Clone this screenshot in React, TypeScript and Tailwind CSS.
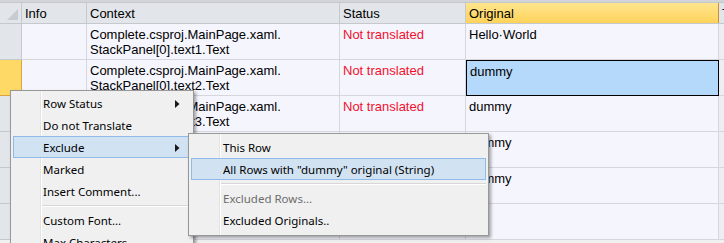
import React from "react";

const cols = [
  { key: "info", title: "Info", w: "w-[65px]" },
  { key: "context", title: "Context", w: "w-[253px]" },
  { key: "status", title: "Status", w: "w-[126px]" },
  { key: "original", title: "Original", w: "w-[253px]" },
];

const rows = [
  { ctx: "text1", status: "Not translated", orig: "Hello·World" },
  { ctx: "text2", status: "Not translated", orig: "dummy", selected: true },
  { ctx: "text3", status: "Not translated", orig: "dummy" },
  { ctx: "text4", status: "Not translated", orig: "dummy" },
  { ctx: "text5", status: "Not translated", orig: "dummy" },
  { ctx: "", status: "", orig: "" },
];

function Arrow() {
  return (
    <svg width="5" height="8" viewBox="0 0 5 8" className="absolute right-[10px] top-[7px]">
      <path d="M0 0 L4.5 4 L0 8 Z" fill="#1a1a1a" />
    </svg>
  );
}

function MenuItem({
  label,
  hot,
  arrow,
  disabled,
  sub,
}: {
  label: string;
  hot?: boolean;
  arrow?: boolean;
  disabled?: boolean;
  sub?: boolean;
}) {
  return (
    <div
      className={
        "relative h-[22px] mx-[2px] flex items-center border " +
        (hot ? "bg-[#d1e2f2] border-[#8fbbe8]" : "border-transparent")
      }
    >
      <span className={(sub ? "pl-[31px] " : "pl-[29px] ") + (disabled ? "text-[#6d6d6d]" : "text-[#000]")}>
        {label}
      </span>
      {arrow && <Arrow />}
    </div>
  );
}

function Separator() {
  return (
    <div className="h-[7px] flex items-center pl-[30px] pr-[2px]">
      <div className="w-full h-[2px] border-t border-[#d7d7d7] border-b border-b-white" />
    </div>
  );
}

export default function App() {
  return (
    <div className="relative w-[724px] h-[243px] overflow-hidden bg-[#f0f0f0] font-['Liberation_Sans',Arial,sans-serif] text-[13px] leading-[15px] text-black">
      <div className="h-[3px] bg-[#d2d4d7] border-b border-[#c4c7cb]" />
      {/* header */}
      <div className="flex h-[21px] border-b border-[#c5c8cc] bg-[#e2e5e9]">
        <div className="relative w-[22px] shrink-0 border-r border-[#c5c8cc]">
          <svg width="11" height="11" className="absolute right-[3px] bottom-[3px]">
            <path d="M11 0 L11 11 L0 11 Z" fill="#c8cbcf" />
          </svg>
        </div>
        {cols.map((c) => (
          <div
            key={c.key}
            className={
              c.w +
              " shrink-0 border-r pl-[3px] flex items-center " +
              (c.key === "original"
                ? "bg-gradient-to-b from-[#ffe58c] to-[#fed35a] border-[#c8903a]"
                : "border-[#c5c8cc]")
            }
          >
            {c.title}
          </div>
        ))}
        <div className="flex-1 pl-[3px] flex items-center overflow-hidden whitespace-nowrap text-[#2a1a4a]">
          Translation
        </div>
      </div>
      {/* rows */}
      {rows.map((r, i) => (
        <div key={i} className="flex h-[36px]">
          <div
            className={
              "w-[22px] shrink-0 border-r border-b " +
              (r.selected ? "bg-[#ffd965] border-[#d9a441]" : "bg-[#e2e5e9] border-[#c5c8cc]")
            }
          />
          <div className="w-[65px] shrink-0 bg-[#f5f5fe] border-r border-b border-[#d6d6de]" />
          <div className="w-[253px] shrink-0 bg-[#f5f5fe] border-r border-b border-[#d6d6de] pl-[3px] pt-[3px]">
            {r.ctx && (
              <>
                <div>Complete.csproj.MainPage.xaml.</div>
                <div>StackPanel[0].{r.ctx}.Text</div>
              </>
            )}
          </div>
          <div className="w-[126px] shrink-0 bg-[#f5f5fe] border-r border-b border-[#d6d6de] pl-[3px] pt-[3px] text-[#f3112c]">
            {r.status}
          </div>
          <div
            className={
              "w-[253px] shrink-0 border-b pl-[3px] pt-[3px] " +
              (r.selected
                ? "bg-[#b5d9fb] border border-black pl-[2px] pt-[2px]"
                : "bg-[#f5f5fe] border-r border-[#d6d6de]")
            }
          >
            {r.orig}
          </div>
          <div className="flex-1 bg-[#eeeef2] border-b border-[#d6d6de]" />
        </div>
      ))}

      {/* context menu */}
      <div className="absolute left-[10px] top-[90px] w-[184px] h-[170px] bg-[#f0f0f0] border border-[#979797] shadow-[2px_2px_3px_rgba(0,0,0,0.35)] pt-[1px] font-['Noto_Sans',sans-serif] text-[11.5px]">
        <div className="absolute left-[29px] top-0 bottom-0 w-[2px] border-l border-[#e2e3e3] border-r border-r-white" />
        <MenuItem label="Row Status" arrow />
        <MenuItem label="Do not Translate" />
        <MenuItem label="Exclude" hot arrow />
        <MenuItem label="Marked" />
        <MenuItem label="Insert Comment..." />
        <Separator />
        <MenuItem label="Custom Font..." />
        <MenuItem label="Max Characters" />
      </div>

      {/* submenu */}
      <div className="absolute left-[188px] top-[133px] w-[301px] h-[103px] bg-[#f0f0f0] border border-[#979797] shadow-[2px_2px_3px_rgba(0,0,0,0.35)] pt-[2px] font-['Noto_Sans',sans-serif] text-[11.5px]">
        <div className="absolute left-[30px] top-0 bottom-0 w-[2px] border-l border-[#e2e3e3] border-r border-r-white" />
        <MenuItem label="This Row" sub />
        <MenuItem label={'All Rows with "dummy" original (String)'} hot sub />
        <Separator />
        <MenuItem label="Excluded Rows..." disabled sub />
        <MenuItem label="Excluded Originals.." sub />
      </div>
    </div>
  );
}
